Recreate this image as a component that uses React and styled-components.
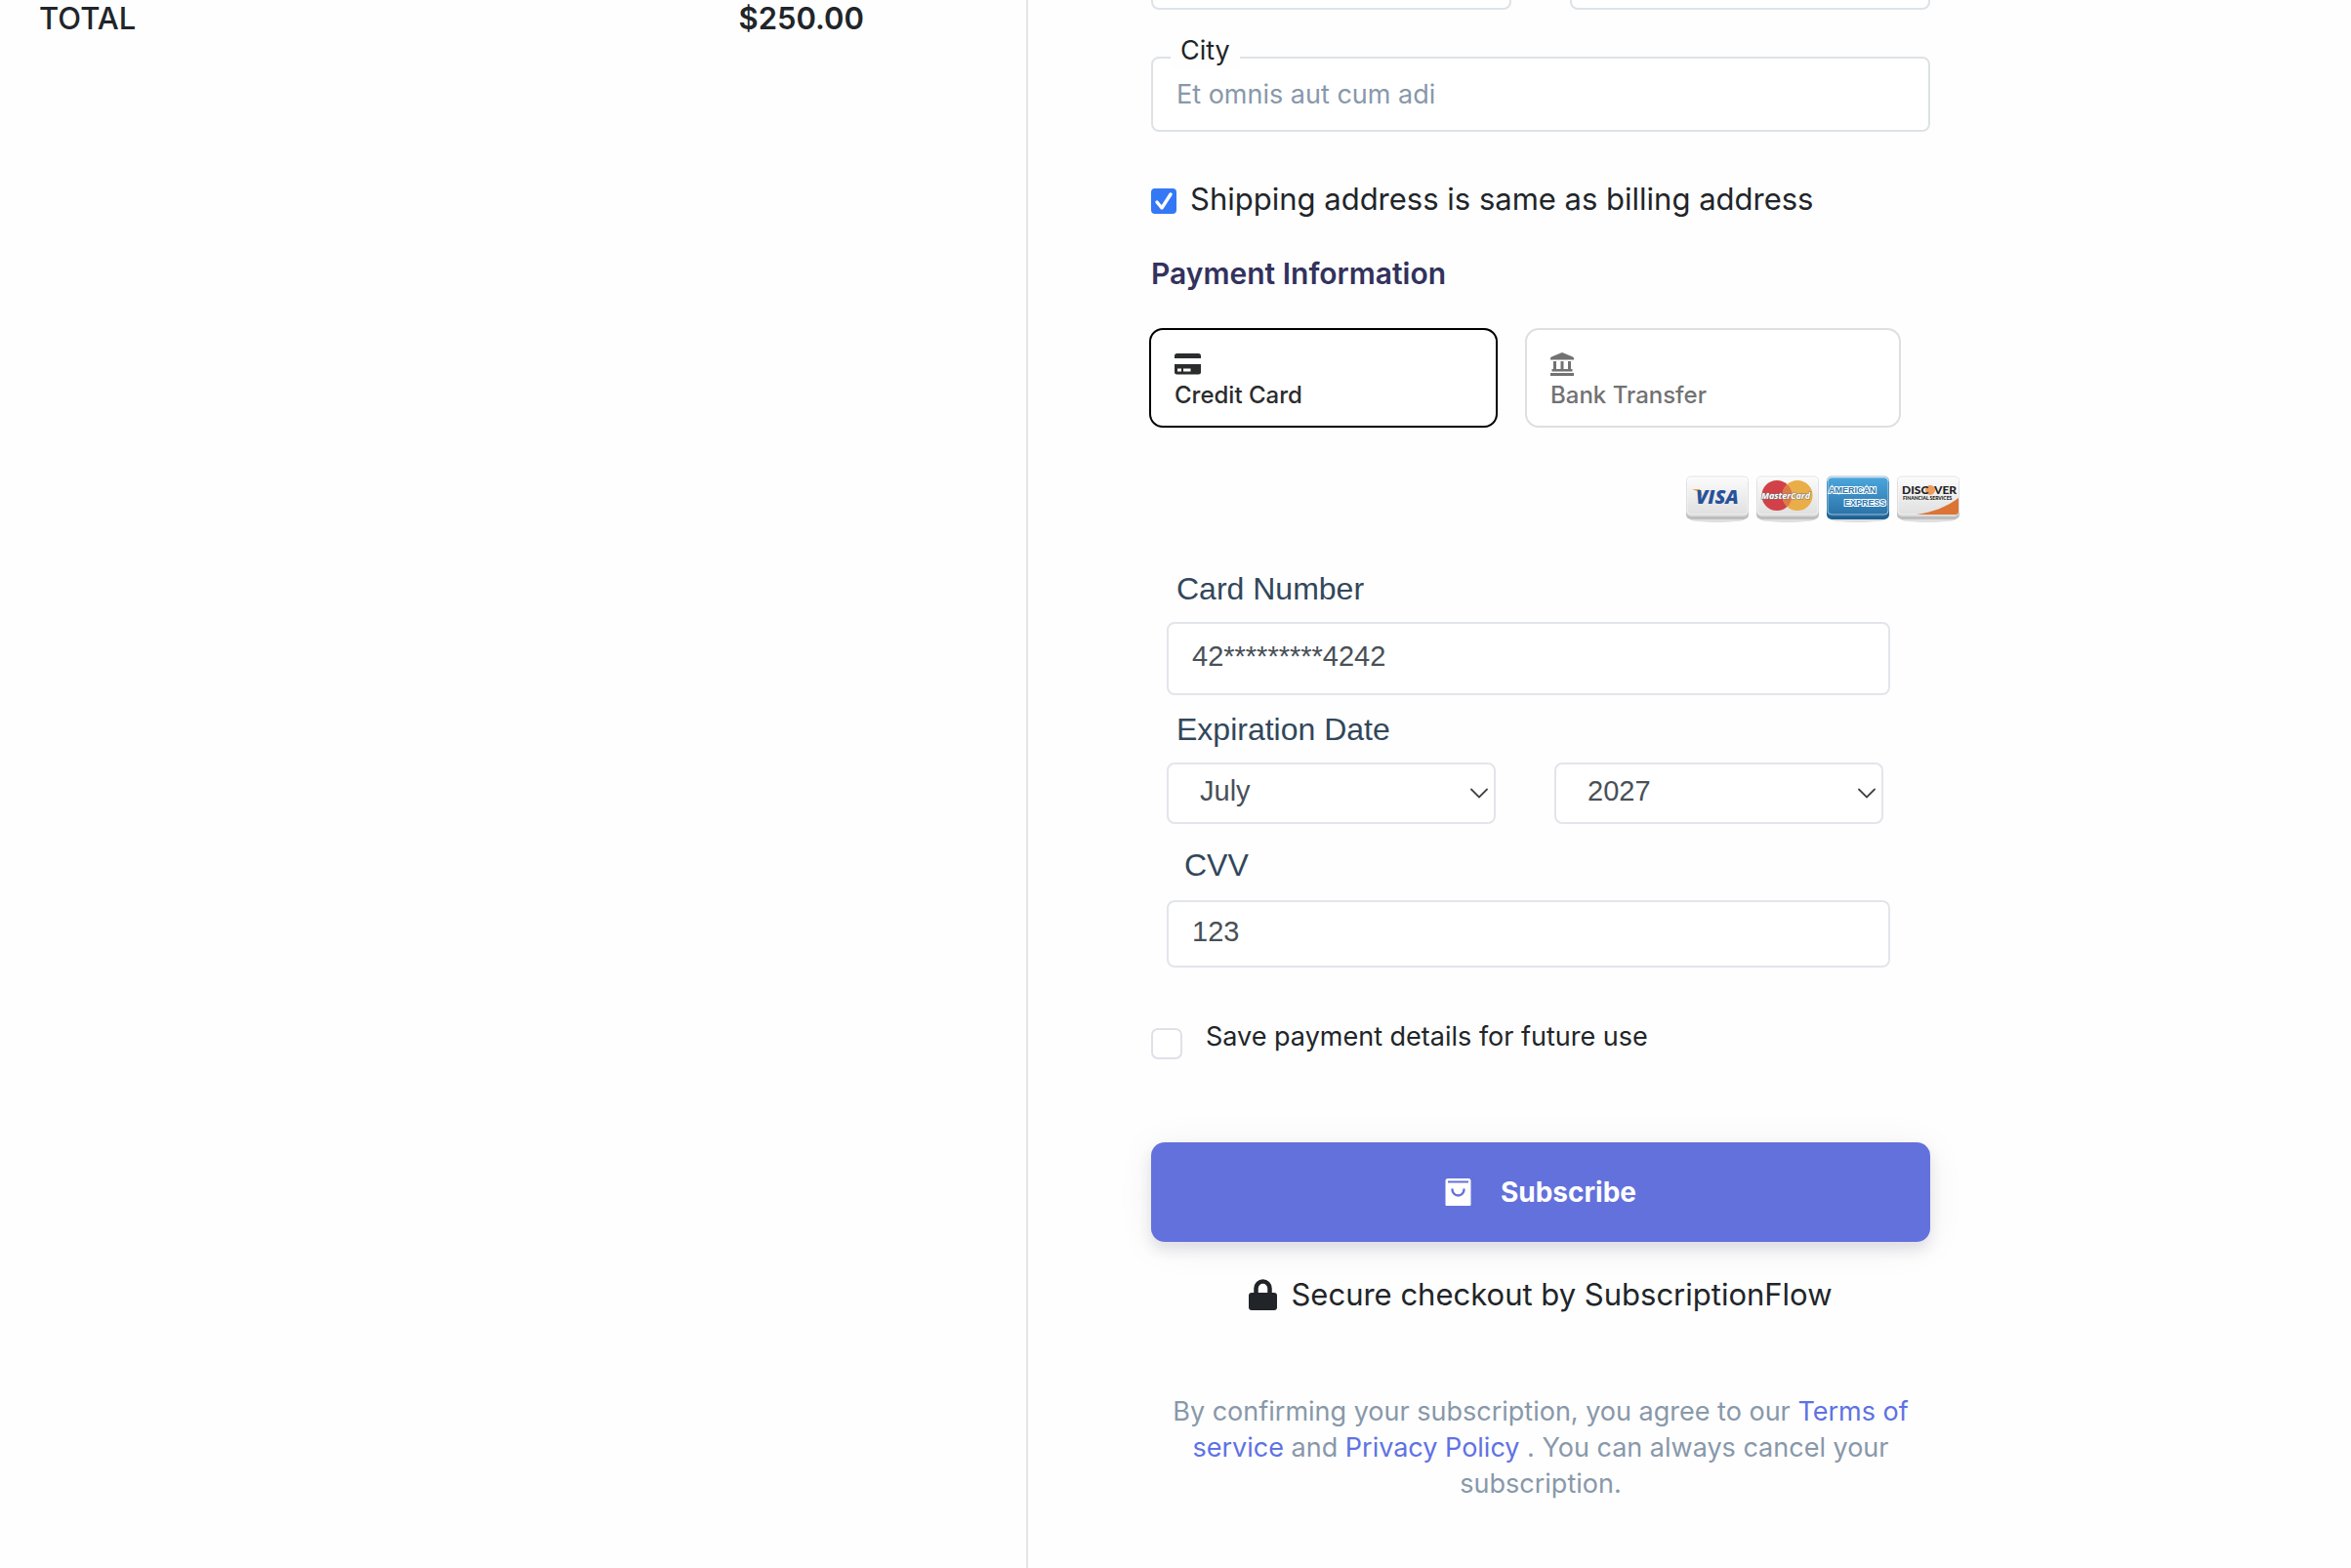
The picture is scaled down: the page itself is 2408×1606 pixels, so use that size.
import React from 'react';
import styled, {createGlobalStyle} from 'styled-components';

const sans = 'Inter, "Liberation Sans", sans-serif';
const arial = '"Liberation Sans", Arial, sans-serif';

const GlobalStyle = createGlobalStyle`
  * { box-sizing: border-box; }
  body {
    margin: 0;
    background: #fefefe;
    color: #212529;
    font-family: ${sans};
    overflow-x: hidden;
  }
`;

const Page = styled.div`
  display: grid;
  grid-template-columns: 1053fr 1355fr;
  min-height: 100vh;
`;

const Summary = styled.aside`
  border-right: 2px solid #e6e6e6;
  padding: 0 166px 0 40px;
`;

const TotalRow = styled.div`
  display: flex;
  justify-content: space-between;
  font-size: 31px;
  line-height: 38px;
  font-weight: 500;
`;

const Amount = styled.span`
  font-weight: 600;
`;

const Checkout = styled.form`
  width: 60%;
  max-width: 798px;
  margin-left: 126px;
`;

// the address rows above are scrolled out of the window
const FieldRow = styled.div`
  display: grid;
  grid-template-columns: 1fr 1fr;
  gap: 60px;
  margin-top: -67px;
`;

const Input = styled.input`
  display: block;
  width: 100%;
  height: 77px;
  padding: 0 24px;
  border: 2px solid #dee2e6;
  border-radius: 8px;
  background: #fff;
  color: #8898aa;
  font: 400 27px ${sans};
  outline: none;
`;

const Outlined = styled.div`
  position: relative;
  margin-top: 48px;
`;

const OutlinedLabel = styled.label`
  position: absolute;
  left: 20px;
  top: -24px;
  padding: 0 10px;
  background: #fefefe;
  font-size: 27px;
  line-height: 36px;
`;

const ShippingRow = styled.label`
  display: flex;
  align-items: center;
  gap: 14px;
  margin-top: 45px;
  font-size: 31px;
  line-height: 48px;
`;

const Tick = styled.input`
  appearance: none;
  flex: none;
  width: 26px;
  height: 26px;
  margin: 4px 0 0;
  border: 2px solid #3478f6;
  border-radius: 4px;
  background: #fff;

  &:checked {
    background: #3478f6 url("data:image/svg+xml,%3Csvg xmlns='http://www.w3.org/2000/svg' viewBox='2 2 22 22'%3E%3Cpath d='M6 14l5 6L20 6' fill='none' stroke='white' stroke-width='3.400' stroke-linecap='round' stroke-linejoin='round'/%3E%3C/svg%3E");
  }
`;

const Heading = styled.h2`
  margin: 32px 0 36px;
  color: #32325d;
  font-size: 30px;
  line-height: 40px;
  font-weight: 600;
`;

const Methods = styled.div`
  display: grid;
  grid-template-columns: 357fr 385fr;
  gap: 28px;
  margin: 0 30px 0 -2px;
`;

const Method = styled.button`
  display: flex;
  flex-direction: column;
  align-items: flex-start;
  gap: 6px;
  height: 102px;
  padding: 23px 24px 0;
  border: 2px solid ${p => (p.$active ? '#000' : '#dfdfdf')};
  border-radius: 14px;
  background: #fff;
  color: ${p => (p.$active ? '#2b2c2d' : '#727272')};
  font: 500 24px/28px ${sans};
`;

const MethodIcon = styled.svg`
  width: 28px;
  height: 24px;
  fill: currentColor;
`;

const Brands = styled.div`
  display: flex;
  justify-content: flex-end;
  gap: 8px;
  margin: 49px -30px 44px 0;
`;

const Brand = styled.svg`
  width: 64px;
  height: 52px;
`;

const CardForm = styled.div`
  margin: 0 41px 0 16px;
`;

const CardLabel = styled.label`
  display: block;
  margin: 15px 0 14px;
  padding-left: 10px;
  color: #32475b;
  font: 400 32px/40px ${arial};
`;

const CvvLabel = styled(CardLabel)`
  margin: 22px 0 16px;
  padding-left: 18px;
`;

const CardInput = styled(Input)`
  height: 75px;
  padding-bottom: 4px;
  border-color: #e2e5ea;
  color: #495057;
  font: 400 29px ${arial};
`;

const CvvInput = styled(CardInput)`
  height: 69px;
`;

const Selects = styled.div`
  display: grid;
  grid-template-columns: 1fr 1fr;
  gap: 60px;
  margin-right: 7px;
`;

const Select = styled.select`
  appearance: none;
  width: 100%;
  height: 63px;
  padding: 0 40px 6px 32px;
  border: 2px solid #e2e5ea;
  border-radius: 8px;
  background: #fff url("data:image/svg+xml,%3Csvg xmlns='http://www.w3.org/2000/svg' viewBox='0 0 18 12'%3E%3Cpath d='M1 1.500l8 8 8-8' fill='none' stroke='%23444' stroke-width='1.800' stroke-linecap='round'/%3E%3C/svg%3E") no-repeat right 6px center / 18px 12px;
  color: #495057;
  font: 400 29px ${arial};
`;

const SaveRow = styled.label`
  display: flex;
  align-items: flex-start;
  gap: 24px;
  margin-top: 55px;
  font-size: 27px;
  line-height: 32px;
`;

const SaveBox = styled.input`
  appearance: none;
  flex: none;
  width: 32px;
  height: 32px;
  margin: 7px 0 0;
  border: 2px solid #dfe1e8;
  border-radius: 7px;
  background: #fff;
`;

const Subscribe = styled.button`
  display: flex;
  align-items: center;
  justify-content: center;
  gap: 30px;
  width: 100%;
  height: 102px;
  margin-top: 85px;
  border: 0;
  border-radius: 14px;
  background: #6371dc;
  box-shadow: 0 8px 14px rgba(50, 50, 93, .12), 0 4px 40px rgba(0, 0, 0, .06);
  color: #fff;
  font: 700 28px ${sans};
`;

const Secure = styled.p`
  display: flex;
  align-items: center;
  justify-content: center;
  gap: 14px;
  margin: 34px 0 81px;
  font-size: 31px;
  line-height: 40px;
`;

const Terms = styled.p`
  margin: 0;
  padding: 0 12px;
  color: #8898aa;
  font-size: 27px;
  line-height: 37px;
  text-align: center;
`;

const Link = styled.a`
  color: #5e72e4;
  text-decoration: none;
`;

function CardIcon() {
  return (
    <MethodIcon viewBox="0 0 28 24" aria-hidden="true">
      <path d="M0 5.500V3.500A2.500 2.500 0 0 1 2.500 1h22A2.500 2.500 0 0 1 27 3.500v2.500H0z"/>
      <path fillRule="evenodd" d="M0 12h27v8a2.500 2.500 0 0 1-2.500 2.500h-22A2.500 2.500 0 0 1 0 20zM3 16.500v3h4v-3zM9 16.500v3h7.500v-3z"/>
    </MethodIcon>
  );
}

function BankIcon() {
  return (
    <MethodIcon viewBox="0 0 28 24" aria-hidden="true">
      <path d="M12 0L1 4.500Q0 5 0 6v1.500h24V6q0-1-1-1.500zM3 9h3v8h4.500V9h3v8H18V9h3v8h1.500v2.500h-21V17H3zM0 21h24v3H0z"/>
    </MethodIcon>
  );
}

function BrandCard({id, label, top = '#fbfbfb', bottom = '#e0e0e0', edge = '#bdbdbd', children}) {
  return (
    <Brand viewBox="0 0 64 52" role="img" aria-label={label}>
      <defs>
        <linearGradient id={id} x1="0" y1="0" x2="0" y2="1">
          <stop offset="0" stopColor={top}/>
          <stop offset="1" stopColor={bottom}/>
        </linearGradient>
      </defs>
      <ellipse cx="32" cy="45" rx="28" ry="3" fill="#000" opacity=".12"/>
      <rect x="0" y="4" width="64" height="41" rx="5" fill={edge}/>
      <rect x="0" y="3" width="64" height="39" rx="5" fill={bottom}/>
      <rect x="1" y="2" width="62" height="38" rx="4" fill={`url(#${id})`} stroke="#fff" strokeOpacity=".6"/>
      <rect x="0" y="1" width="64" height="40" rx="5" fill="none" stroke={edge} strokeWidth=".6" opacity=".7"/>
      {children}
    </Brand>
  );
}

function AcceptedCards() {
  return (
    <Brands>
      <BrandCard id="visa" label="Visa">
        <path d="M6 14h8l4 10c-2-5-6-8-12-10z" fill="#e9a63b"/>
        <text x="10" y="29" fontFamily="Open Sans" fontSize="20" fontWeight="800" fontStyle="italic" fill="#27529a">VISA</text>
      </BrandCard>
      <BrandCard id="mastercard" label="MasterCard">
        <circle cx="21" cy="20.500" r="15.500" fill="#d14147"/>
        <circle cx="42" cy="20.500" r="15.500" fill="#e9ae48"/>
        <path d="M31.500 9a15.500 15.500 0 0 1 0 23a15.500 15.500 0 0 1 0-23z" fill="#dd7a45"/>
        <text x="5" y="24" fontFamily="Open Sans" fontSize="9" fontWeight="700" fontStyle="italic" fill="#fff" stroke="#777" strokeWidth="1" paintOrder="stroke">MasterCard</text>
      </BrandCard>
      <BrandCard id="amex" label="American Express" top="#4ba6dc" bottom="#2b73a9" edge="#1e6193">
        <g fontFamily="Liberation Sans" fontSize="9" fontWeight="700" fill="#2c78b0" stroke="#fff" strokeWidth="2" paintOrder="stroke">
          <text x="2" y="18">AMERICAN</text>
          <text x="18" y="31">EXPRESS</text>
        </g>
      </BrandCard>
      <BrandCard id="discover" label="Discover">
        <path d="M20 40c16-2 31-8 43-17v14a3 3 0 0 1-3 3z" fill="#dc7436"/>
        <circle cx="34" cy="15" r="5" fill="#ee9a5c"/>
        <g fontFamily="Lato" fontWeight="900" fill="#222">
          <text x="5" y="19" fontSize="12">DISC</text>
          <text x="38" y="19" fontSize="12">VER</text>
          <text x="6" y="25" fontSize="5">FINANCIAL SERVICES</text>
        </g>
      </BrandCard>
    </Brands>
  );
}

function BagIcon() {
  return (
    <svg width="27" height="29" viewBox="0 0 27 29" aria-hidden="true">
      <path fill="#fff" d="M3 0h21a2.500 2.500 0 0 1 2.500 2.500V27a1 1 0 0 1-1 1h-24a1 1 0 0 1-1-1V2.500A2.500 2.500 0 0 1 3 0z"/>
      <path d="M3 3.500h21" stroke="#6371dc" strokeWidth="2"/>
      <path d="M7.500 11.500a6 6 0 0 0 12 0" fill="none" stroke="#6371dc" strokeWidth="2.400" strokeLinecap="round"/>
    </svg>
  );
}

function LockIcon() {
  return (
    <svg width="29" height="32" viewBox="0 0 29 32" aria-hidden="true">
      <rect x="0" y="14" width="29" height="18" rx="3" fill="#212529"/>
      <path d="M7.500 16V9.500a7 7 0 0 1 14 0V16" fill="none" stroke="#212529" strokeWidth="4.500"/>
    </svg>
  );
}

function App() {
  return (
    <>
      <GlobalStyle/>
      <Page>
        <Summary>
          <TotalRow>
            <span>TOTAL</span>
            <Amount>$250.00</Amount>
          </TotalRow>
        </Summary>
        <Checkout onSubmit={e => e.preventDefault()}>
          <FieldRow>
            <Input aria-label="State"/>
            <Input aria-label="Postal code"/>
          </FieldRow>
          <Outlined>
            <OutlinedLabel htmlFor="city">City</OutlinedLabel>
            <Input id="city" defaultValue="Et omnis aut cum adi"/>
          </Outlined>
          <ShippingRow>
            <Tick type="checkbox" defaultChecked/>
            Shipping address is same as billing address
          </ShippingRow>
          <Heading>Payment Information</Heading>
          <Methods>
            <Method type="button" $active>
              <CardIcon/>
              Credit Card
            </Method>
            <Method type="button">
              <BankIcon/>
              Bank Transfer
            </Method>
          </Methods>
          <AcceptedCards/>
          <CardForm>
            <CardLabel htmlFor="number">Card Number</CardLabel>
            <CardInput id="number" defaultValue="42*********4242"/>
            <CardLabel htmlFor="month">Expiration Date</CardLabel>
            <Selects>
              <Select id="month" defaultValue="July">
                <option>July</option>
              </Select>
              <Select aria-label="Expiration year" defaultValue="2027">
                <option>2027</option>
              </Select>
            </Selects>
            <CvvLabel htmlFor="cvv">CVV</CvvLabel>
            <CvvInput id="cvv" defaultValue="123"/>
          </CardForm>
          <SaveRow>
            <SaveBox type="checkbox"/>
            Save payment details for future use
          </SaveRow>
          <Subscribe type="submit">
            <BagIcon/>
            Subscribe
          </Subscribe>
          <Secure>
            <LockIcon/>
            Secure checkout by SubscriptionFlow
          </Secure>
          <Terms>
            By confirming your subscription, you agree to our <Link href="#terms">Terms of service</Link> and{' '}
            <Link href="#privacy">Privacy Policy</Link> . You can always cancel your subscription.
          </Terms>
        </Checkout>
      </Page>
    </>
  );
}

export default App;
